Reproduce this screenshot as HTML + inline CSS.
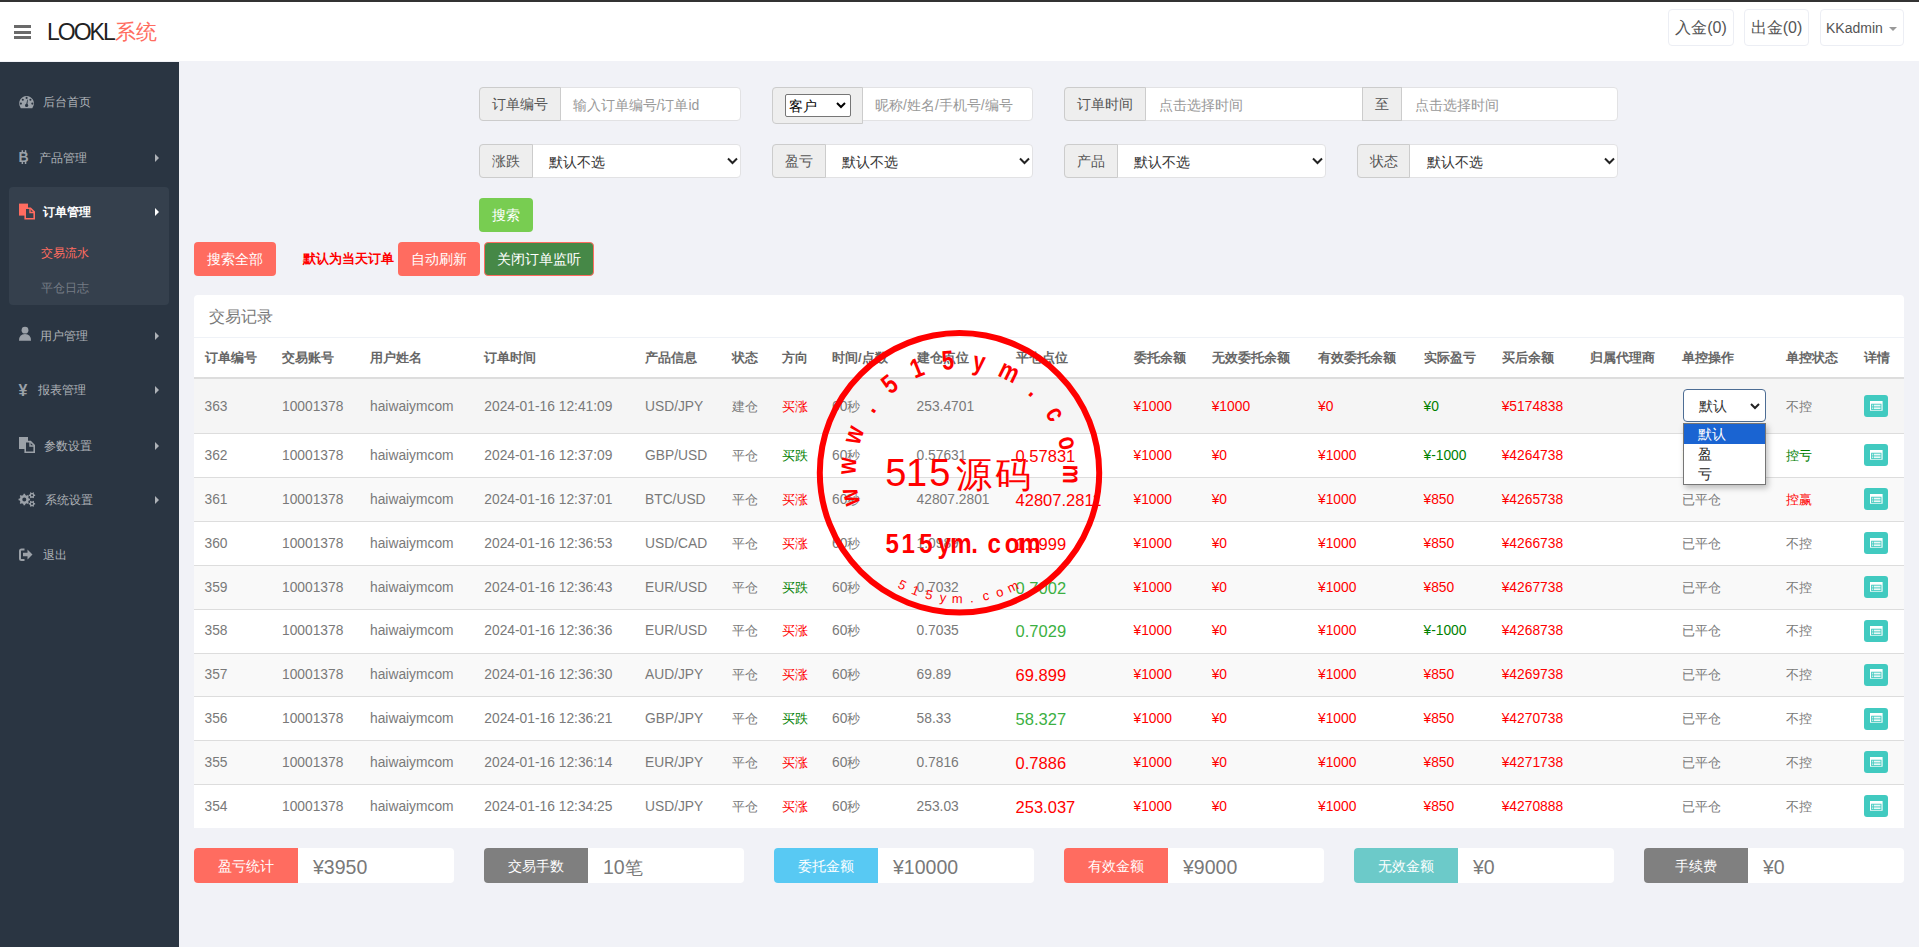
<!DOCTYPE html><html><head><meta charset="utf-8"><style>
*{box-sizing:border-box;margin:0;padding:0}
html,body{width:1919px;height:947px;overflow:hidden}
body{position:relative;background:#f1f2f7;font-family:"Liberation Sans",sans-serif;color:#797979}
.a{position:absolute;white-space:nowrap}
.mid{line-height:1;transform:translateY(-50%)}
.box{position:absolute}
.menu{font-size:12px;color:#aeb2b7}
.ig{position:absolute;background:#fff;border:1px solid #e2e2e4;border-radius:4px;height:34px}
.ad{position:absolute;top:-1px;bottom:-1px;background:#eee;border:1px solid #ccc;border-radius:4px 0 0 4px;color:#555;font-size:14px}
.btn{position:absolute;color:#fff;font-size:14px;border-radius:4px;text-align:center}
.th{position:absolute;font-size:13px;font-weight:bold;color:#666;top:357px;line-height:1;transform:translateY(-50%)}
.td{position:absolute;font-size:13.8px;line-height:1;transform:translateY(-50%);white-space:nowrap}
.cj{font-size:13px;margin-top:-1px}
.r{color:#ff0000}
.g{color:#008000}
.big{font-size:16.5px}
.lg{color:#35b043}
.sum{position:absolute;top:848px;height:35px;width:260px;background:#fff;border-radius:4px;overflow:hidden}
.sl{position:absolute;left:0;top:0;bottom:0;width:104px;color:#fff;font-size:14px;text-align:center;line-height:37px}
.sv{position:absolute;left:119px;top:1px;line-height:36px;font-size:19.5px;color:#797979}
</style></head><body>
<div class="box" style="left:0;top:0;width:1919px;height:2px;background:#333"></div>
<div class="box" style="left:0;top:2px;width:1919px;height:59px;background:#fff"></div>
<div class="box" style="left:14px;top:25px;width:17px;height:3px;background:#6a6a6a"></div>
<div class="box" style="left:14px;top:30.5px;width:17px;height:3px;background:#6a6a6a"></div>
<div class="box" style="left:14px;top:36px;width:17px;height:3px;background:#6a6a6a"></div>
<div class="a mid" style="left:47px;top:31.7px;font-size:23px;color:#222;letter-spacing:-2px">LOOKL<span style="color:#ff6c60;font-size:21px;letter-spacing:0;margin-left:1.5px;position:relative;top:-0.5px">系统</span></div>
<div class="box" style="left:1668px;top:9px;width:66px;height:37px;border:1px solid #eceef4;border-radius:4px;color:#555;font-size:16px;text-align:center;line-height:36px">入金(0)</div>
<div class="box" style="left:1744px;top:9px;width:65px;height:37px;border:1px solid #eceef4;border-radius:4px;color:#555;font-size:16px;text-align:center;line-height:36px">出金(0)</div>
<div class="box" style="left:1820px;top:9px;width:84px;height:37px;border:1px solid #eceef4;border-radius:4px;color:#555;font-size:14px;line-height:36px;padding-left:5px">KKadmin</div>
<div class="box" style="left:1889px;top:27px;width:0;height:0;border-left:4px solid transparent;border-right:4px solid transparent;border-top:4px solid #999"></div>
<div class="box" style="left:0;top:62px;width:179px;height:885px;background:#2a3542"></div>
<div class="box" style="left:9px;top:187px;width:160px;height:118px;background:#35404d;border-radius:4px"></div>
<div class="a menu mid" style="left:43px;top:102px">后台首页</div>
<div class="a menu mid" style="left:39px;top:157.5px">产品管理</div>
<div class="box" style="left:155px;top:153.5px;width:0;height:0;border-top:4px solid transparent;border-bottom:4px solid transparent;border-left:4px solid #aeb2b7"></div>
<div class="a menu mid" style="left:40px;top:335.5px">用户管理</div>
<div class="box" style="left:155px;top:331.5px;width:0;height:0;border-top:4px solid transparent;border-bottom:4px solid transparent;border-left:4px solid #aeb2b7"></div>
<div class="a menu mid" style="left:37.5px;top:390.3px">报表管理</div>
<div class="box" style="left:155px;top:386.3px;width:0;height:0;border-top:4px solid transparent;border-bottom:4px solid transparent;border-left:4px solid #aeb2b7"></div>
<div class="a menu mid" style="left:43.7px;top:445.8px">参数设置</div>
<div class="box" style="left:155px;top:441.8px;width:0;height:0;border-top:4px solid transparent;border-bottom:4px solid transparent;border-left:4px solid #aeb2b7"></div>
<div class="a menu mid" style="left:45px;top:500.3px">系统设置</div>
<div class="box" style="left:155px;top:496.3px;width:0;height:0;border-top:4px solid transparent;border-bottom:4px solid transparent;border-left:4px solid #aeb2b7"></div>
<div class="a menu mid" style="left:42.5px;top:555.2px">退出</div>
<div class="a menu mid" style="left:43px;top:212px;color:#fff;font-weight:bold">订单管理</div>
<div class="box" style="left:155px;top:208px;width:0;height:0;border-top:4px solid transparent;border-bottom:4px solid transparent;border-left:4px solid #fff"></div>
<div class="a menu mid" style="left:41px;top:252.7px;color:#ff6c60">交易流水</div>
<div class="a menu mid" style="left:41px;top:287.8px;color:#767c85">平仓日志</div>
<svg class="box" style="left:0;top:0" width="179" height="600" viewBox="0 0 179 600">
<path d="M20.1 106.8 A7.35 7.35 0 1 1 33 106.8 L32.3 108.2 H20.8 Z" fill="#9ba1a8"/>
<g fill="#2a3542">
<circle cx="20.9" cy="103.6" r="1.05"/><circle cx="22.8" cy="99.8" r="1.05"/><circle cx="26.6" cy="97.9" r="1.05"/><circle cx="30.4" cy="99.8" r="1.05"/><circle cx="32.3" cy="103.6" r="1.05"/>
<path d="M26 105.3 L27.3 99.6 L27.9 99.7 L27.3 105.6 Z"/><circle cx="26.6" cy="105.4" r="1.6"/>
</g>
<text x="18.6" y="162" font-family="Liberation Sans" font-weight="bold" font-size="14" fill="#9ba1a8">B</text>
<rect x="21.6" y="150.2" width="1.5" height="3" fill="#9ba1a8"/><rect x="24.8" y="150.2" width="1.5" height="3" fill="#9ba1a8"/>
<rect x="21.6" y="161" width="1.5" height="3" fill="#9ba1a8"/><rect x="24.8" y="161" width="1.5" height="3" fill="#9ba1a8"/>
<rect x="19" y="203.6" width="9" height="12" fill="#ff6c60"/><path d="M25.2 208.2 h5.3 l3.7 3.7 v6.9 h-9 z" fill="#35404d" stroke="#ff6c60" stroke-width="1.6"/><path d="M30 208.5 v4 h4" fill="none" stroke="#ff6c60" stroke-width="1.4"/>
<g fill="#9ba1a8"><circle cx="25" cy="330.2" r="3.4"/><path d="M19 340.8 q0 -6.8 6 -6.8 q6 0 6 6.8 z"/></g>
<text x="18.5" y="395.5" font-family="Liberation Sans" font-weight="bold" font-size="16" fill="#9ba1a8">¥</text>
<rect x="19" y="437" width="9" height="12" fill="#9ba1a8"/><path d="M25.2 441.6 h5.3 l3.7 3.7 v6.9 h-9 z" fill="#2a3542" stroke="#9ba1a8" stroke-width="1.6"/><path d="M30 442 v4 h4" fill="none" stroke="#9ba1a8" stroke-width="1.4"/>
<path d="M28.79 498.51 L30.05 498.71 L30.05 500.29 L28.79 500.49 L28.17 501.98 L28.92 503.00 L27.80 504.12 L26.78 503.37 L25.29 503.99 L25.09 505.25 L23.51 505.25 L23.31 503.99 L21.82 503.37 L20.80 504.12 L19.68 503.00 L20.43 501.98 L19.81 500.49 L18.55 500.29 L18.55 498.71 L19.81 498.51 L20.43 497.02 L19.68 496.00 L20.80 494.88 L21.82 495.63 L23.31 495.01 L23.51 493.75 L25.09 493.75 L25.29 495.01 L26.78 495.63 L27.80 494.88 L28.92 496.00 L28.17 497.02 Z M26.30 499.50 A2.0 2.0 0 1 0 22.30 499.50 A2.0 2.0 0 1 0 26.30 499.50 Z" fill="#9ba1a8" fill-rule="evenodd"/><path d="M34.30 494.62 L35.15 494.72 L35.15 495.88 L34.30 495.98 L33.74 496.95 L34.08 497.73 L33.07 498.32 L32.56 497.63 L31.44 497.63 L30.93 498.32 L29.92 497.73 L30.26 496.95 L29.70 495.98 L28.85 495.88 L28.85 494.72 L29.70 494.62 L30.26 493.65 L29.92 492.87 L30.93 492.28 L31.44 492.97 L32.56 492.97 L33.07 492.28 L34.08 492.87 L33.74 493.65 Z M33.10 495.30 A1.1 1.1 0 1 0 30.90 495.30 A1.1 1.1 0 1 0 33.10 495.30 Z" fill="#9ba1a8" fill-rule="evenodd"/><path d="M34.30 503.12 L35.15 503.22 L35.15 504.38 L34.30 504.48 L33.74 505.45 L34.08 506.23 L33.07 506.82 L32.56 506.13 L31.44 506.13 L30.93 506.82 L29.92 506.23 L30.26 505.45 L29.70 504.48 L28.85 504.38 L28.85 503.22 L29.70 503.12 L30.26 502.15 L29.92 501.37 L30.93 500.78 L31.44 501.47 L32.56 501.47 L33.07 500.78 L34.08 501.37 L33.74 502.15 Z M33.10 503.80 A1.1 1.1 0 1 0 30.90 503.80 A1.1 1.1 0 1 0 33.10 503.80 Z" fill="#9ba1a8" fill-rule="evenodd"/>
<path d="M24.5 549.5 h-3 a1.5 1.5 0 0 0 -1.5 1.5 v7.5 a1.5 1.5 0 0 0 1.5 1.5 h3" fill="none" stroke="#9ba1a8" stroke-width="2"/><path d="M23 552.8 h4.5 v-3.3 l5 5 l-5 5 v-3.3 h-4.5 z" fill="#9ba1a8"/>
</svg>
<div class="ig" style="left:479px;top:87px;width:262px"></div>
<div class="box" style="left:479px;top:87px;width:82px;height:34px;background:#eee;border:1px solid #ccc;border-radius:4px 0 0 4px"></div>
<div class="a mid" style="left:491.5px;top:104px;font-size:14px;color:#555">订单编号</div>
<div class="a mid" style="left:572.5px;top:104.5px;font-size:14px;color:#999">输入订单编号/订单id</div>
<div class="ig" style="left:772px;top:87px;width:261px"></div>
<div class="box" style="left:772px;top:87px;width:91px;height:37px;background:#eee;border:1px solid #ccc;border-radius:4px 0 0 4px"></div>
<div class="box" style="left:785px;top:94px;width:66px;height:23px;background:#fff;border:1px solid #767676;border-radius:2px"></div>
<div class="a mid" style="left:789px;top:105.5px;font-size:14px;color:#000">客户</div>
<svg class="box" style="left:836px;top:102px" width="10" height="7" viewBox="0 0 10 7"><path d="M1 1 L5 5 L9 1" fill="none" stroke="#000" stroke-width="2"/></svg>
<div class="a mid" style="left:875px;top:104.5px;font-size:14px;color:#999">昵称/姓名/手机号/编号</div>
<div class="ig" style="left:1064px;top:87px;width:554px"></div>
<div class="box" style="left:1064px;top:87px;width:82px;height:34px;background:#eee;border:1px solid #ccc;border-radius:4px 0 0 4px"></div>
<div class="a mid" style="left:1076.5px;top:104px;font-size:14px;color:#555">订单时间</div>
<div class="a mid" style="left:1158.5px;top:104.5px;font-size:14px;color:#999">点击选择时间</div>
<div class="box" style="left:1362px;top:87px;width:40px;height:34px;background:#eee;border:1px solid #ccc"></div>
<div class="a mid" style="left:1375px;top:104px;font-size:14px;color:#555">至</div>
<div class="a mid" style="left:1415px;top:104.5px;font-size:14px;color:#999">点击选择时间</div>
<div class="ig" style="left:479px;top:144px;width:262px"></div>
<div class="box" style="left:479px;top:144px;width:53.5px;height:34px;background:#eee;border:1px solid #ccc;border-radius:4px 0 0 4px"></div>
<div class="a mid" style="left:491.5px;top:161px;font-size:14px;color:#555">涨跌</div>
<div class="a mid" style="left:549px;top:161.5px;font-size:14px;color:#333">默认不选</div>
<svg class="box" style="left:727px;top:157px" width="11" height="8" viewBox="0 0 11 8"><path d="M1 1.5 L5.5 6 L10 1.5" fill="none" stroke="#222" stroke-width="2"/></svg>
<div class="ig" style="left:772px;top:144px;width:261px"></div>
<div class="box" style="left:772px;top:144px;width:53.5px;height:34px;background:#eee;border:1px solid #ccc;border-radius:4px 0 0 4px"></div>
<div class="a mid" style="left:784.5px;top:161px;font-size:14px;color:#555">盈亏</div>
<div class="a mid" style="left:841.5px;top:161.5px;font-size:14px;color:#333">默认不选</div>
<svg class="box" style="left:1019px;top:157px" width="11" height="8" viewBox="0 0 11 8"><path d="M1 1.5 L5.5 6 L10 1.5" fill="none" stroke="#222" stroke-width="2"/></svg>
<div class="ig" style="left:1064px;top:144px;width:262px"></div>
<div class="box" style="left:1064px;top:144px;width:53.5px;height:34px;background:#eee;border:1px solid #ccc;border-radius:4px 0 0 4px"></div>
<div class="a mid" style="left:1076.5px;top:161px;font-size:14px;color:#555">产品</div>
<div class="a mid" style="left:1134px;top:161.5px;font-size:14px;color:#333">默认不选</div>
<svg class="box" style="left:1312px;top:157px" width="11" height="8" viewBox="0 0 11 8"><path d="M1 1.5 L5.5 6 L10 1.5" fill="none" stroke="#222" stroke-width="2"/></svg>
<div class="ig" style="left:1357px;top:144px;width:261px"></div>
<div class="box" style="left:1357px;top:144px;width:53px;height:34px;background:#eee;border:1px solid #ccc;border-radius:4px 0 0 4px"></div>
<div class="a mid" style="left:1369.5px;top:161px;font-size:14px;color:#555">状态</div>
<div class="a mid" style="left:1426.5px;top:161.5px;font-size:14px;color:#333">默认不选</div>
<svg class="box" style="left:1604px;top:157px" width="11" height="8" viewBox="0 0 11 8"><path d="M1 1.5 L5.5 6 L10 1.5" fill="none" stroke="#222" stroke-width="2"/></svg>
<div class="btn" style="left:479px;top:198px;width:54px;height:34px;line-height:34px;background:#78cd51">搜索</div>
<div class="btn" style="left:194px;top:242px;width:82px;height:34px;line-height:34px;background:#ff6c60">搜索全部</div>
<div class="a mid" style="left:303px;top:258px;font-size:13px;font-weight:bold;color:#f00">默认为当天订单</div>
<div class="btn" style="left:398px;top:242px;width:82px;height:34px;line-height:34px;background:#ff6c60">自动刷新</div>
<div class="btn" style="left:484px;top:242px;width:110px;height:34px;line-height:32px;background:#468847;border:1px solid #ff6c60">关闭订单监听</div>
<div class="box" style="left:194px;top:295px;width:1710px;height:533px;background:#fff;border-radius:4px"></div>
<div class="a mid" style="left:209px;top:317px;font-size:16px;color:#797979">交易记录</div>
<div class="box" style="left:194px;top:337px;width:1710px;height:1px;background:#eff2f7"></div>
<div class="th" style="left:204.5px">订单编号</div>
<div class="th" style="left:282px">交易账号</div>
<div class="th" style="left:370px">用户姓名</div>
<div class="th" style="left:484.3px">订单时间</div>
<div class="th" style="left:645px">产品信息</div>
<div class="th" style="left:731.6px">状态</div>
<div class="th" style="left:781.9px">方向</div>
<div class="th" style="left:832px">时间/点数</div>
<div class="th" style="left:916.6px">建仓点位</div>
<div class="th" style="left:1015.6px">平仓点位</div>
<div class="th" style="left:1133.5px">委托余额</div>
<div class="th" style="left:1211.7px">无效委托余额</div>
<div class="th" style="left:1318px">有效委托余额</div>
<div class="th" style="left:1423.5px">实际盈亏</div>
<div class="th" style="left:1501.7px">买后余额</div>
<div class="th" style="left:1590.3px">归属代理商</div>
<div class="th" style="left:1682px">单控操作</div>
<div class="th" style="left:1786px">单控状态</div>
<div class="th" style="left:1864px">详情</div>
<div class="box" style="left:194px;top:377px;width:1710px;height:2px;background:#ddd"></div>
<div class="box" style="left:194px;top:379px;width:1710px;height:54.30000000000001px;background:#f5f5f5"></div>
<div class="td " style="left:204.5px;top:406.84999999999997px;color:#797979;">363</div>
<div class="td " style="left:282px;top:406.84999999999997px;color:#797979;">10001378</div>
<div class="td " style="left:370px;top:406.84999999999997px;color:#797979;">haiwaiymcom</div>
<div class="td " style="left:484.3px;top:406.84999999999997px;color:#797979;">2024-01-16 12:41:09</div>
<div class="td " style="left:645px;top:406.84999999999997px;color:#797979;">USD/JPY</div>
<div class="td cj" style="left:731.6px;top:406.84999999999997px;color:#797979;">建仓</div>
<div class="td cj" style="left:781.9px;top:406.84999999999997px;color:#f00;">买涨</div>
<div class="td " style="left:832px;top:406.84999999999997px;color:#797979;">60<span class="cj">秒</span></div>
<div class="td " style="left:916.6px;top:406.84999999999997px;color:#797979;">253.4701</div>
<div class="td " style="left:1133.5px;top:406.84999999999997px;color:#f00;">¥1000</div>
<div class="td " style="left:1211.7px;top:406.84999999999997px;color:#f00;">¥1000</div>
<div class="td " style="left:1318px;top:406.84999999999997px;color:#f00;">¥0</div>
<div class="td " style="left:1423.5px;top:406.84999999999997px;color:#008000;">¥0</div>
<div class="td " style="left:1501.7px;top:406.84999999999997px;color:#f00;">¥5174838</div>
<div class="td cj" style="left:1786px;top:406.84999999999997px;color:#797979;">不控</div>
<div class="box" style="left:1864px;top:395.34999999999997px;width:24px;height:22px;background:#41cac0;border-radius:3px"></div>
<svg class="box" style="left:1870px;top:401.04999999999995px" width="13" height="10" viewBox="0 0 13 10"><rect x="0" y="0" width="12.6" height="9.7" fill="#fff"/><rect x="1.6" y="3.2" width="9.4" height="5.4" fill="#e8f8f6" stroke="#41cac0" stroke-width="0.9"/><path d="M1.6 5.9 H11 M3.3 3.2 V8.6" stroke="#41cac0" stroke-width="0.9"/></svg>
<div class="box" style="left:194px;top:434.3px;width:1710px;height:42.860000000000014px;background:#fff"></div>
<div class="box" style="left:194px;top:433.3px;width:1710px;height:1px;background:#ddd"></div>
<div class="td " style="left:204.5px;top:455.93px;color:#797979;">362</div>
<div class="td " style="left:282px;top:455.93px;color:#797979;">10001378</div>
<div class="td " style="left:370px;top:455.93px;color:#797979;">haiwaiymcom</div>
<div class="td " style="left:484.3px;top:455.93px;color:#797979;">2024-01-16 12:37:09</div>
<div class="td " style="left:645px;top:455.93px;color:#797979;">GBP/USD</div>
<div class="td cj" style="left:731.6px;top:455.93px;color:#797979;">平仓</div>
<div class="td cj" style="left:781.9px;top:455.93px;color:#008000;">买跌</div>
<div class="td " style="left:832px;top:455.93px;color:#797979;">60<span class="cj">秒</span></div>
<div class="td " style="left:916.6px;top:455.93px;color:#797979;">0.57631</div>
<div class="td big" style="left:1015.6px;top:455.93px;color:#f00;">0.57831</div>
<div class="td " style="left:1133.5px;top:455.93px;color:#f00;">¥1000</div>
<div class="td " style="left:1211.7px;top:455.93px;color:#f00;">¥0</div>
<div class="td " style="left:1318px;top:455.93px;color:#f00;">¥1000</div>
<div class="td " style="left:1423.5px;top:455.93px;color:#008000;">¥-1000</div>
<div class="td " style="left:1501.7px;top:455.93px;color:#f00;">¥4264738</div>
<div class="td cj" style="left:1682px;top:455.93px;color:#797979;">已平仓</div>
<div class="td cj" style="left:1786px;top:455.93px;color:#008000;">控亏</div>
<div class="box" style="left:1864px;top:444.43px;width:24px;height:22px;background:#41cac0;border-radius:3px"></div>
<svg class="box" style="left:1870px;top:450.13px" width="13" height="10" viewBox="0 0 13 10"><rect x="0" y="0" width="12.6" height="9.7" fill="#fff"/><rect x="1.6" y="3.2" width="9.4" height="5.4" fill="#e8f8f6" stroke="#41cac0" stroke-width="0.9"/><path d="M1.6 5.9 H11 M3.3 3.2 V8.6" stroke="#41cac0" stroke-width="0.9"/></svg>
<div class="box" style="left:194px;top:478.16px;width:1710px;height:42.85999999999996px;background:#f9f9f9"></div>
<div class="box" style="left:194px;top:477.16px;width:1710px;height:1px;background:#ddd"></div>
<div class="td " style="left:204.5px;top:499.79px;color:#797979;">361</div>
<div class="td " style="left:282px;top:499.79px;color:#797979;">10001378</div>
<div class="td " style="left:370px;top:499.79px;color:#797979;">haiwaiymcom</div>
<div class="td " style="left:484.3px;top:499.79px;color:#797979;">2024-01-16 12:37:01</div>
<div class="td " style="left:645px;top:499.79px;color:#797979;">BTC/USD</div>
<div class="td cj" style="left:731.6px;top:499.79px;color:#797979;">平仓</div>
<div class="td cj" style="left:781.9px;top:499.79px;color:#f00;">买涨</div>
<div class="td " style="left:832px;top:499.79px;color:#797979;">60<span class="cj">秒</span></div>
<div class="td " style="left:916.6px;top:499.79px;color:#797979;">42807.2801</div>
<div class="td big" style="left:1015.6px;top:499.79px;color:#f00;">42807.2811</div>
<div class="td " style="left:1133.5px;top:499.79px;color:#f00;">¥1000</div>
<div class="td " style="left:1211.7px;top:499.79px;color:#f00;">¥0</div>
<div class="td " style="left:1318px;top:499.79px;color:#f00;">¥1000</div>
<div class="td " style="left:1423.5px;top:499.79px;color:#f00;">¥850</div>
<div class="td " style="left:1501.7px;top:499.79px;color:#f00;">¥4265738</div>
<div class="td cj" style="left:1682px;top:499.79px;color:#797979;">已平仓</div>
<div class="td cj" style="left:1786px;top:499.79px;color:#f00;">控赢</div>
<div class="box" style="left:1864px;top:488.29px;width:24px;height:22px;background:#41cac0;border-radius:3px"></div>
<svg class="box" style="left:1870px;top:493.99px" width="13" height="10" viewBox="0 0 13 10"><rect x="0" y="0" width="12.6" height="9.7" fill="#fff"/><rect x="1.6" y="3.2" width="9.4" height="5.4" fill="#e8f8f6" stroke="#41cac0" stroke-width="0.9"/><path d="M1.6 5.9 H11 M3.3 3.2 V8.6" stroke="#41cac0" stroke-width="0.9"/></svg>
<div class="box" style="left:194px;top:522.02px;width:1710px;height:42.860000000000014px;background:#fff"></div>
<div class="box" style="left:194px;top:521.02px;width:1710px;height:1px;background:#ddd"></div>
<div class="td " style="left:204.5px;top:543.6500000000001px;color:#797979;">360</div>
<div class="td " style="left:282px;top:543.6500000000001px;color:#797979;">10001378</div>
<div class="td " style="left:370px;top:543.6500000000001px;color:#797979;">haiwaiymcom</div>
<div class="td " style="left:484.3px;top:543.6500000000001px;color:#797979;">2024-01-16 12:36:53</div>
<div class="td " style="left:645px;top:543.6500000000001px;color:#797979;">USD/CAD</div>
<div class="td cj" style="left:731.6px;top:543.6500000000001px;color:#797979;">平仓</div>
<div class="td cj" style="left:781.9px;top:543.6500000000001px;color:#f00;">买涨</div>
<div class="td " style="left:832px;top:543.6500000000001px;color:#797979;">60<span class="cj">秒</span></div>
<div class="td " style="left:916.6px;top:543.6500000000001px;color:#797979;">1.0989</div>
<div class="td big" style="left:1015.6px;top:543.6500000000001px;color:#f00;">1.0999</div>
<div class="td " style="left:1133.5px;top:543.6500000000001px;color:#f00;">¥1000</div>
<div class="td " style="left:1211.7px;top:543.6500000000001px;color:#f00;">¥0</div>
<div class="td " style="left:1318px;top:543.6500000000001px;color:#f00;">¥1000</div>
<div class="td " style="left:1423.5px;top:543.6500000000001px;color:#f00;">¥850</div>
<div class="td " style="left:1501.7px;top:543.6500000000001px;color:#f00;">¥4266738</div>
<div class="td cj" style="left:1682px;top:543.6500000000001px;color:#797979;">已平仓</div>
<div class="td cj" style="left:1786px;top:543.6500000000001px;color:#797979;">不控</div>
<div class="box" style="left:1864px;top:532.1500000000001px;width:24px;height:22px;background:#41cac0;border-radius:3px"></div>
<svg class="box" style="left:1870px;top:537.8500000000001px" width="13" height="10" viewBox="0 0 13 10"><rect x="0" y="0" width="12.6" height="9.7" fill="#fff"/><rect x="1.6" y="3.2" width="9.4" height="5.4" fill="#e8f8f6" stroke="#41cac0" stroke-width="0.9"/><path d="M1.6 5.9 H11 M3.3 3.2 V8.6" stroke="#41cac0" stroke-width="0.9"/></svg>
<div class="box" style="left:194px;top:565.88px;width:1710px;height:42.860000000000014px;background:#f9f9f9"></div>
<div class="box" style="left:194px;top:564.88px;width:1710px;height:1px;background:#ddd"></div>
<div class="td " style="left:204.5px;top:587.51px;color:#797979;">359</div>
<div class="td " style="left:282px;top:587.51px;color:#797979;">10001378</div>
<div class="td " style="left:370px;top:587.51px;color:#797979;">haiwaiymcom</div>
<div class="td " style="left:484.3px;top:587.51px;color:#797979;">2024-01-16 12:36:43</div>
<div class="td " style="left:645px;top:587.51px;color:#797979;">EUR/USD</div>
<div class="td cj" style="left:731.6px;top:587.51px;color:#797979;">平仓</div>
<div class="td cj" style="left:781.9px;top:587.51px;color:#008000;">买跌</div>
<div class="td " style="left:832px;top:587.51px;color:#797979;">60<span class="cj">秒</span></div>
<div class="td " style="left:916.6px;top:587.51px;color:#797979;">0.7032</div>
<div class="td big" style="left:1015.6px;top:587.51px;color:#3cb043;">0.7002</div>
<div class="td " style="left:1133.5px;top:587.51px;color:#f00;">¥1000</div>
<div class="td " style="left:1211.7px;top:587.51px;color:#f00;">¥0</div>
<div class="td " style="left:1318px;top:587.51px;color:#f00;">¥1000</div>
<div class="td " style="left:1423.5px;top:587.51px;color:#f00;">¥850</div>
<div class="td " style="left:1501.7px;top:587.51px;color:#f00;">¥4267738</div>
<div class="td cj" style="left:1682px;top:587.51px;color:#797979;">已平仓</div>
<div class="td cj" style="left:1786px;top:587.51px;color:#797979;">不控</div>
<div class="box" style="left:1864px;top:576.01px;width:24px;height:22px;background:#41cac0;border-radius:3px"></div>
<svg class="box" style="left:1870px;top:581.71px" width="13" height="10" viewBox="0 0 13 10"><rect x="0" y="0" width="12.6" height="9.7" fill="#fff"/><rect x="1.6" y="3.2" width="9.4" height="5.4" fill="#e8f8f6" stroke="#41cac0" stroke-width="0.9"/><path d="M1.6 5.9 H11 M3.3 3.2 V8.6" stroke="#41cac0" stroke-width="0.9"/></svg>
<div class="box" style="left:194px;top:609.74px;width:1710px;height:42.860000000000014px;background:#fff"></div>
<div class="box" style="left:194px;top:608.74px;width:1710px;height:1px;background:#ddd"></div>
<div class="td " style="left:204.5px;top:631.3700000000001px;color:#797979;">358</div>
<div class="td " style="left:282px;top:631.3700000000001px;color:#797979;">10001378</div>
<div class="td " style="left:370px;top:631.3700000000001px;color:#797979;">haiwaiymcom</div>
<div class="td " style="left:484.3px;top:631.3700000000001px;color:#797979;">2024-01-16 12:36:36</div>
<div class="td " style="left:645px;top:631.3700000000001px;color:#797979;">EUR/USD</div>
<div class="td cj" style="left:731.6px;top:631.3700000000001px;color:#797979;">平仓</div>
<div class="td cj" style="left:781.9px;top:631.3700000000001px;color:#f00;">买涨</div>
<div class="td " style="left:832px;top:631.3700000000001px;color:#797979;">60<span class="cj">秒</span></div>
<div class="td " style="left:916.6px;top:631.3700000000001px;color:#797979;">0.7035</div>
<div class="td big" style="left:1015.6px;top:631.3700000000001px;color:#3cb043;">0.7029</div>
<div class="td " style="left:1133.5px;top:631.3700000000001px;color:#f00;">¥1000</div>
<div class="td " style="left:1211.7px;top:631.3700000000001px;color:#f00;">¥0</div>
<div class="td " style="left:1318px;top:631.3700000000001px;color:#f00;">¥1000</div>
<div class="td " style="left:1423.5px;top:631.3700000000001px;color:#008000;">¥-1000</div>
<div class="td " style="left:1501.7px;top:631.3700000000001px;color:#f00;">¥4268738</div>
<div class="td cj" style="left:1682px;top:631.3700000000001px;color:#797979;">已平仓</div>
<div class="td cj" style="left:1786px;top:631.3700000000001px;color:#797979;">不控</div>
<div class="box" style="left:1864px;top:619.8700000000001px;width:24px;height:22px;background:#41cac0;border-radius:3px"></div>
<svg class="box" style="left:1870px;top:625.5700000000002px" width="13" height="10" viewBox="0 0 13 10"><rect x="0" y="0" width="12.6" height="9.7" fill="#fff"/><rect x="1.6" y="3.2" width="9.4" height="5.4" fill="#e8f8f6" stroke="#41cac0" stroke-width="0.9"/><path d="M1.6 5.9 H11 M3.3 3.2 V8.6" stroke="#41cac0" stroke-width="0.9"/></svg>
<div class="box" style="left:194px;top:653.6px;width:1710px;height:42.860000000000014px;background:#f9f9f9"></div>
<div class="box" style="left:194px;top:652.6px;width:1710px;height:1px;background:#ddd"></div>
<div class="td " style="left:204.5px;top:675.23px;color:#797979;">357</div>
<div class="td " style="left:282px;top:675.23px;color:#797979;">10001378</div>
<div class="td " style="left:370px;top:675.23px;color:#797979;">haiwaiymcom</div>
<div class="td " style="left:484.3px;top:675.23px;color:#797979;">2024-01-16 12:36:30</div>
<div class="td " style="left:645px;top:675.23px;color:#797979;">AUD/JPY</div>
<div class="td cj" style="left:731.6px;top:675.23px;color:#797979;">平仓</div>
<div class="td cj" style="left:781.9px;top:675.23px;color:#f00;">买涨</div>
<div class="td " style="left:832px;top:675.23px;color:#797979;">60<span class="cj">秒</span></div>
<div class="td " style="left:916.6px;top:675.23px;color:#797979;">69.89</div>
<div class="td big" style="left:1015.6px;top:675.23px;color:#f00;">69.899</div>
<div class="td " style="left:1133.5px;top:675.23px;color:#f00;">¥1000</div>
<div class="td " style="left:1211.7px;top:675.23px;color:#f00;">¥0</div>
<div class="td " style="left:1318px;top:675.23px;color:#f00;">¥1000</div>
<div class="td " style="left:1423.5px;top:675.23px;color:#f00;">¥850</div>
<div class="td " style="left:1501.7px;top:675.23px;color:#f00;">¥4269738</div>
<div class="td cj" style="left:1682px;top:675.23px;color:#797979;">已平仓</div>
<div class="td cj" style="left:1786px;top:675.23px;color:#797979;">不控</div>
<div class="box" style="left:1864px;top:663.73px;width:24px;height:22px;background:#41cac0;border-radius:3px"></div>
<svg class="box" style="left:1870px;top:669.4300000000001px" width="13" height="10" viewBox="0 0 13 10"><rect x="0" y="0" width="12.6" height="9.7" fill="#fff"/><rect x="1.6" y="3.2" width="9.4" height="5.4" fill="#e8f8f6" stroke="#41cac0" stroke-width="0.9"/><path d="M1.6 5.9 H11 M3.3 3.2 V8.6" stroke="#41cac0" stroke-width="0.9"/></svg>
<div class="box" style="left:194px;top:697.46px;width:1710px;height:42.8599999999999px;background:#fff"></div>
<div class="box" style="left:194px;top:696.46px;width:1710px;height:1px;background:#ddd"></div>
<div class="td " style="left:204.5px;top:719.09px;color:#797979;">356</div>
<div class="td " style="left:282px;top:719.09px;color:#797979;">10001378</div>
<div class="td " style="left:370px;top:719.09px;color:#797979;">haiwaiymcom</div>
<div class="td " style="left:484.3px;top:719.09px;color:#797979;">2024-01-16 12:36:21</div>
<div class="td " style="left:645px;top:719.09px;color:#797979;">GBP/JPY</div>
<div class="td cj" style="left:731.6px;top:719.09px;color:#797979;">平仓</div>
<div class="td cj" style="left:781.9px;top:719.09px;color:#008000;">买跌</div>
<div class="td " style="left:832px;top:719.09px;color:#797979;">60<span class="cj">秒</span></div>
<div class="td " style="left:916.6px;top:719.09px;color:#797979;">58.33</div>
<div class="td big" style="left:1015.6px;top:719.09px;color:#3cb043;">58.327</div>
<div class="td " style="left:1133.5px;top:719.09px;color:#f00;">¥1000</div>
<div class="td " style="left:1211.7px;top:719.09px;color:#f00;">¥0</div>
<div class="td " style="left:1318px;top:719.09px;color:#f00;">¥1000</div>
<div class="td " style="left:1423.5px;top:719.09px;color:#f00;">¥850</div>
<div class="td " style="left:1501.7px;top:719.09px;color:#f00;">¥4270738</div>
<div class="td cj" style="left:1682px;top:719.09px;color:#797979;">已平仓</div>
<div class="td cj" style="left:1786px;top:719.09px;color:#797979;">不控</div>
<div class="box" style="left:1864px;top:707.59px;width:24px;height:22px;background:#41cac0;border-radius:3px"></div>
<svg class="box" style="left:1870px;top:713.2900000000001px" width="13" height="10" viewBox="0 0 13 10"><rect x="0" y="0" width="12.6" height="9.7" fill="#fff"/><rect x="1.6" y="3.2" width="9.4" height="5.4" fill="#e8f8f6" stroke="#41cac0" stroke-width="0.9"/><path d="M1.6 5.9 H11 M3.3 3.2 V8.6" stroke="#41cac0" stroke-width="0.9"/></svg>
<div class="box" style="left:194px;top:741.3199999999999px;width:1710px;height:42.86000000000013px;background:#f9f9f9"></div>
<div class="box" style="left:194px;top:740.3199999999999px;width:1710px;height:1px;background:#ddd"></div>
<div class="td " style="left:204.5px;top:762.95px;color:#797979;">355</div>
<div class="td " style="left:282px;top:762.95px;color:#797979;">10001378</div>
<div class="td " style="left:370px;top:762.95px;color:#797979;">haiwaiymcom</div>
<div class="td " style="left:484.3px;top:762.95px;color:#797979;">2024-01-16 12:36:14</div>
<div class="td " style="left:645px;top:762.95px;color:#797979;">EUR/JPY</div>
<div class="td cj" style="left:731.6px;top:762.95px;color:#797979;">平仓</div>
<div class="td cj" style="left:781.9px;top:762.95px;color:#f00;">买涨</div>
<div class="td " style="left:832px;top:762.95px;color:#797979;">60<span class="cj">秒</span></div>
<div class="td " style="left:916.6px;top:762.95px;color:#797979;">0.7816</div>
<div class="td big" style="left:1015.6px;top:762.95px;color:#f00;">0.7886</div>
<div class="td " style="left:1133.5px;top:762.95px;color:#f00;">¥1000</div>
<div class="td " style="left:1211.7px;top:762.95px;color:#f00;">¥0</div>
<div class="td " style="left:1318px;top:762.95px;color:#f00;">¥1000</div>
<div class="td " style="left:1423.5px;top:762.95px;color:#f00;">¥850</div>
<div class="td " style="left:1501.7px;top:762.95px;color:#f00;">¥4271738</div>
<div class="td cj" style="left:1682px;top:762.95px;color:#797979;">已平仓</div>
<div class="td cj" style="left:1786px;top:762.95px;color:#797979;">不控</div>
<div class="box" style="left:1864px;top:751.45px;width:24px;height:22px;background:#41cac0;border-radius:3px"></div>
<svg class="box" style="left:1870px;top:757.1500000000001px" width="13" height="10" viewBox="0 0 13 10"><rect x="0" y="0" width="12.6" height="9.7" fill="#fff"/><rect x="1.6" y="3.2" width="9.4" height="5.4" fill="#e8f8f6" stroke="#41cac0" stroke-width="0.9"/><path d="M1.6 5.9 H11 M3.3 3.2 V8.6" stroke="#41cac0" stroke-width="0.9"/></svg>
<div class="box" style="left:194px;top:785.1800000000001px;width:1710px;height:42.8599999999999px;background:#fff"></div>
<div class="box" style="left:194px;top:784.1800000000001px;width:1710px;height:1px;background:#ddd"></div>
<div class="td " style="left:204.5px;top:806.8100000000001px;color:#797979;">354</div>
<div class="td " style="left:282px;top:806.8100000000001px;color:#797979;">10001378</div>
<div class="td " style="left:370px;top:806.8100000000001px;color:#797979;">haiwaiymcom</div>
<div class="td " style="left:484.3px;top:806.8100000000001px;color:#797979;">2024-01-16 12:34:25</div>
<div class="td " style="left:645px;top:806.8100000000001px;color:#797979;">USD/JPY</div>
<div class="td cj" style="left:731.6px;top:806.8100000000001px;color:#797979;">平仓</div>
<div class="td cj" style="left:781.9px;top:806.8100000000001px;color:#f00;">买涨</div>
<div class="td " style="left:832px;top:806.8100000000001px;color:#797979;">60<span class="cj">秒</span></div>
<div class="td " style="left:916.6px;top:806.8100000000001px;color:#797979;">253.03</div>
<div class="td big" style="left:1015.6px;top:806.8100000000001px;color:#f00;">253.037</div>
<div class="td " style="left:1133.5px;top:806.8100000000001px;color:#f00;">¥1000</div>
<div class="td " style="left:1211.7px;top:806.8100000000001px;color:#f00;">¥0</div>
<div class="td " style="left:1318px;top:806.8100000000001px;color:#f00;">¥1000</div>
<div class="td " style="left:1423.5px;top:806.8100000000001px;color:#f00;">¥850</div>
<div class="td " style="left:1501.7px;top:806.8100000000001px;color:#f00;">¥4270888</div>
<div class="td cj" style="left:1682px;top:806.8100000000001px;color:#797979;">已平仓</div>
<div class="td cj" style="left:1786px;top:806.8100000000001px;color:#797979;">不控</div>
<div class="box" style="left:1864px;top:795.3100000000001px;width:24px;height:22px;background:#41cac0;border-radius:3px"></div>
<svg class="box" style="left:1870px;top:801.0100000000001px" width="13" height="10" viewBox="0 0 13 10"><rect x="0" y="0" width="12.6" height="9.7" fill="#fff"/><rect x="1.6" y="3.2" width="9.4" height="5.4" fill="#e8f8f6" stroke="#41cac0" stroke-width="0.9"/><path d="M1.6 5.9 H11 M3.3 3.2 V8.6" stroke="#41cac0" stroke-width="0.9"/></svg>
<div class="box" style="left:1682.5px;top:388.8px;width:83.5px;height:33.5px;background:#fff;border:1px solid #4d6d94;border-radius:4px"></div>
<div class="a mid" style="left:1699px;top:406px;font-size:14px;color:#333">默认</div>
<svg class="box" style="left:1750px;top:403px" width="10" height="7" viewBox="0 0 10 7"><path d="M1 1 L5 5 L9 1" fill="none" stroke="#222" stroke-width="2"/></svg>
<div class="box" style="left:1682.5px;top:423px;width:83.5px;height:62px;background:#fff;border:1px solid #767676;box-shadow:2px 3px 6px rgba(0,0,0,0.25)"></div>
<div class="box" style="left:1683.5px;top:424px;width:81.5px;height:20px;background:#1a64d2"></div>
<div class="a mid" style="left:1698px;top:434px;font-size:14px;color:#fff">默认</div>
<div class="a mid" style="left:1698px;top:454px;font-size:14px;color:#222">盈</div>
<div class="a mid" style="left:1698px;top:474px;font-size:14px;color:#222">亏</div>
<div class="sum" style="left:194px"><div class="sl" style="background:#ff6c60">盈亏统计</div><div class="sv">¥3950</div></div>
<div class="sum" style="left:484px"><div class="sl" style="background:#7f7f7f">交易手数</div><div class="sv">10<span style="font-size:18px">笔</span></div></div>
<div class="sum" style="left:774px"><div class="sl" style="background:#58c9f3">委托金额</div><div class="sv">¥10000</div></div>
<div class="sum" style="left:1064px"><div class="sl" style="background:#ff6c60">有效金额</div><div class="sv">¥9000</div></div>
<div class="sum" style="left:1354px"><div class="sl" style="background:#6ccac9">无效金额</div><div class="sv">¥0</div></div>
<div class="sum" style="left:1644px"><div class="sl" style="background:#808080">手续费</div><div class="sv">¥0</div></div>
<svg class="box" style="left:0;top:0;pointer-events:none" width="1919" height="947" viewBox="0 0 1919 947"><circle cx="959.5" cy="472.8" r="139.7" fill="none" stroke="#f00" stroke-width="6"/><text transform="translate(849.3 497.5) rotate(257.2) scale(0.8 1)" text-anchor="middle" dominant-baseline="central" font-family="Liberation Sans" font-weight="bold" font-size="27" fill="#f00">w</text><text transform="translate(846.7 465.9) rotate(273.3) scale(0.8 1)" text-anchor="middle" dominant-baseline="central" font-family="Liberation Sans" font-weight="bold" font-size="27" fill="#f00">w</text><text transform="translate(853.0 434.8) rotate(289.5) scale(0.8 1)" text-anchor="middle" dominant-baseline="central" font-family="Liberation Sans" font-weight="bold" font-size="27" fill="#f00">w</text><text transform="translate(867.6 406.7) rotate(305.6) scale(0.8 1)" text-anchor="middle" dominant-baseline="central" font-family="Liberation Sans" font-weight="bold" font-size="27" fill="#f00">.</text><text transform="translate(889.5 383.8) rotate(321.7) scale(0.8 1)" text-anchor="middle" dominant-baseline="central" font-family="Liberation Sans" font-weight="bold" font-size="27" fill="#f00">5</text><text transform="translate(916.9 367.8) rotate(337.9) scale(0.8 1)" text-anchor="middle" dominant-baseline="central" font-family="Liberation Sans" font-weight="bold" font-size="27" fill="#f00">1</text><text transform="translate(947.7 360.1) rotate(354.0) scale(0.8 1)" text-anchor="middle" dominant-baseline="central" font-family="Liberation Sans" font-weight="bold" font-size="27" fill="#f00">5</text><text transform="translate(979.4 361.3) rotate(370.1) scale(0.8 1)" text-anchor="middle" dominant-baseline="central" font-family="Liberation Sans" font-weight="bold" font-size="27" fill="#f00">y</text><text transform="translate(1009.5 371.2) rotate(386.3) scale(0.8 1)" text-anchor="middle" dominant-baseline="central" font-family="Liberation Sans" font-weight="bold" font-size="27" fill="#f00">m</text><text transform="translate(1035.7 389.1) rotate(402.4) scale(0.8 1)" text-anchor="middle" dominant-baseline="central" font-family="Liberation Sans" font-weight="bold" font-size="27" fill="#f00">.</text><text transform="translate(1055.9 413.5) rotate(418.5) scale(0.8 1)" text-anchor="middle" dominant-baseline="central" font-family="Liberation Sans" font-weight="bold" font-size="27" fill="#f00">c</text><text transform="translate(1068.5 442.6) rotate(434.7) scale(0.8 1)" text-anchor="middle" dominant-baseline="central" font-family="Liberation Sans" font-weight="bold" font-size="27" fill="#f00">o</text><text transform="translate(1072.5 474.1) rotate(450.8) scale(0.8 1)" text-anchor="middle" dominant-baseline="central" font-family="Liberation Sans" font-weight="bold" font-size="27" fill="#f00">m</text><text x="902.3" y="584.8" transform="rotate(27.0 902.3 584.8)" text-anchor="middle" dominant-baseline="central" font-family="Liberation Sans" font-size="13" fill="#f00">5</text><text x="915.4" y="590.5" transform="rotate(20.5 915.4 590.5)" text-anchor="middle" dominant-baseline="central" font-family="Liberation Sans" font-size="13" fill="#f00">1</text><text x="929.0" y="594.8" transform="rotate(14.0 929.0 594.8)" text-anchor="middle" dominant-baseline="central" font-family="Liberation Sans" font-size="13" fill="#f00">5</text><text x="943.1" y="597.4" transform="rotate(7.5 943.1 597.4)" text-anchor="middle" dominant-baseline="central" font-family="Liberation Sans" font-size="13" fill="#f00">y</text><text x="957.3" y="598.5" transform="rotate(1.0 957.3 598.5)" text-anchor="middle" dominant-baseline="central" font-family="Liberation Sans" font-size="13" fill="#f00">m</text><text x="971.6" y="597.9" transform="rotate(-5.5 971.6 597.9)" text-anchor="middle" dominant-baseline="central" font-family="Liberation Sans" font-size="13" fill="#f00">.</text><text x="985.7" y="595.7" transform="rotate(-12.0 985.7 595.7)" text-anchor="middle" dominant-baseline="central" font-family="Liberation Sans" font-size="13" fill="#f00">c</text><text x="999.5" y="592.0" transform="rotate(-18.5 999.5 592.0)" text-anchor="middle" dominant-baseline="central" font-family="Liberation Sans" font-size="13" fill="#f00">o</text><text x="1012.7" y="586.7" transform="rotate(-25.0 1012.7 586.7)" text-anchor="middle" dominant-baseline="central" font-family="Liberation Sans" font-size="13" fill="#f00">m</text><text x="895.8" y="486.3" text-anchor="middle" font-family="Liberation Sans" font-size="38" fill="#f00">5</text><text x="916.5" y="486.3" text-anchor="middle" font-family="Liberation Sans" font-size="38" fill="#f00">1</text><text x="939.9" y="486.3" text-anchor="middle" font-family="Liberation Sans" font-size="38" fill="#f00">5</text><text x="974" y="487" text-anchor="middle" font-family="Liberation Serif" font-size="36" fill="#f00">源</text><text x="1012.5" y="487" text-anchor="middle" font-family="Liberation Serif" font-size="36" fill="#f00">码</text><text transform="translate(892.2 553.3) scale(0.86 1)" text-anchor="middle" font-family="Liberation Sans" font-weight="bold" font-size="28" fill="#f00">5</text><text transform="translate(908.2 553.3) scale(0.86 1)" text-anchor="middle" font-family="Liberation Sans" font-weight="bold" font-size="28" fill="#f00">1</text><text transform="translate(926 553.3) scale(0.86 1)" text-anchor="middle" font-family="Liberation Sans" font-weight="bold" font-size="28" fill="#f00">5</text><text transform="translate(944.1 553.3) scale(0.86 1)" text-anchor="middle" font-family="Liberation Sans" font-weight="bold" font-size="28" fill="#f00">y</text><text transform="translate(961 553.3) scale(0.86 1)" text-anchor="middle" font-family="Liberation Sans" font-weight="bold" font-size="28" fill="#f00">m</text><text transform="translate(974.5 553.3) scale(0.86 1)" text-anchor="middle" font-family="Liberation Sans" font-weight="bold" font-size="28" fill="#f00">.</text><text transform="translate(994.3 553.3) scale(0.86 1)" text-anchor="middle" font-family="Liberation Sans" font-weight="bold" font-size="28" fill="#f00">c</text><text transform="translate(1012 553.3) scale(0.86 1)" text-anchor="middle" font-family="Liberation Sans" font-weight="bold" font-size="28" fill="#f00">o</text><text transform="translate(1030 553.3) scale(0.86 1)" text-anchor="middle" font-family="Liberation Sans" font-weight="bold" font-size="28" fill="#f00">m</text></svg>
</body></html>
